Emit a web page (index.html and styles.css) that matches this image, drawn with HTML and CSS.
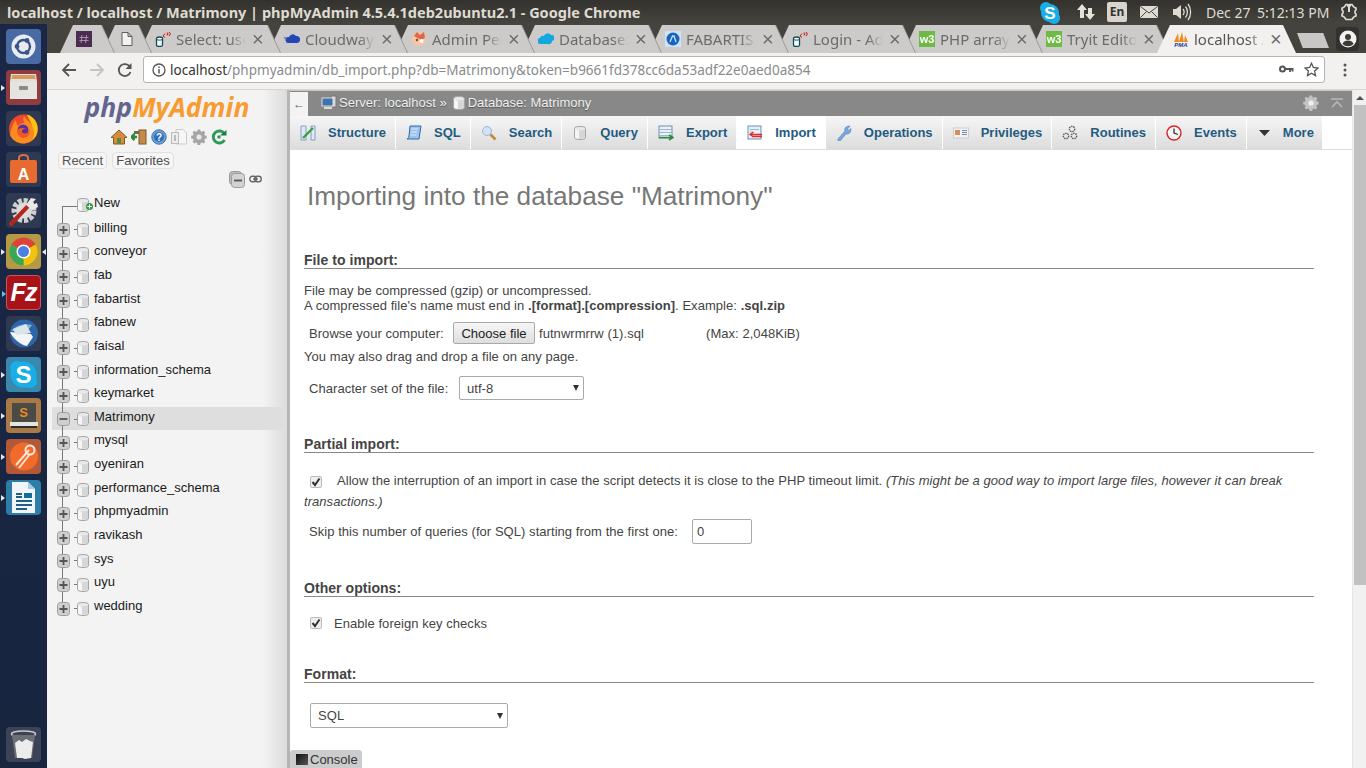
FILE: index.html
```html
<!DOCTYPE html>
<html lang="en">
<head>
<meta charset="utf-8">
<title>localhost / localhost / Matrimony | phpMyAdmin</title>
<link rel="stylesheet" href="styles.css">
</head>
<body>
<svg class="defs" width="0" height="0">
  <defs>
    <symbol id="db" viewBox="0 0 12 14">
      <path d="M.5 2.500C.5 1 3 .5 6 .5s5.500.5 5.500 2v9c0 1.500-2.500 2-5.500 2s-5.500-.5-5.500-2z" fill="#e9e9e9" stroke="#a5a5a5"/>
      <path d="M1 3.500c1.500 1 8.500 1 10 0v8c-1.500 1.300-8.500 1.300-10 0z" fill="#d6d6d6"/>
      <path d="M1 3.500c1.500 1 4 1 4 1v8c-2 0-3-.4-4-1z" fill="#f6f6f6"/>
    </symbol>
    <symbol id="plus" viewBox="0 0 13 14">
      <rect x=".5" y=".5" width="12" height="13" rx="3" fill="#cfcfcf" stroke="#9d9d9d"/>
      <path d="M2.500 7h8M6.500 3v8" stroke="#555" stroke-width="1.800"/>
    </symbol>
    <symbol id="minus" viewBox="0 0 13 14">
      <rect x=".5" y=".5" width="12" height="13" rx="3" fill="#cfcfcf" stroke="#9d9d9d"/>
      <path d="M2.500 7h8" stroke="#555" stroke-width="1.800"/>
    </symbol>
    <symbol id="sqlfav" viewBox="0 0 16 16">
      <path d="M1.500 7.500c0-1 1-1.500 3-1.500s3 .5 3 1.500v6.500c0 1-1 1.500-3 1.500s-3-.5-3-1.500z" fill="#fff" stroke="#0b4d57" stroke-width="1.300"/>
      <path d="M1.500 8.500c1 .8 5 .8 6 0" fill="none" stroke="#0b4d57"/>
      <path d="M8 5l2-2.500M8 5l2 1.500M15.500 3l-1.500-2M15.500 3l-1.500 2M11.800 2h1v1.500h-.7v1" fill="none" stroke="#d41414" stroke-width="1"/>
    </symbol>
    <symbol id="w3" viewBox="0 0 16 16">
      <rect width="16" height="16" fill="#6dbb44"/>
      <text x="8" y="12" text-anchor="middle" font-family="Liberation Sans, sans-serif" font-size="11" font-weight="700" fill="#fff">w3</text>
    </symbol>
    <symbol id="gear" viewBox="0 0 16 16">
      <path d="M6.500 1h3l.4 2 1.500.7 1.800-1.100 2 2-1.100 1.800.7 1.500 2 .4v3l-2 .4-.7 1.500 1.100 1.800-2 2-1.800-1.100-1.500.7-.4 2h-3l-.4-2-1.500-.7-1.800 1.100-2-2 1.100-1.800-.7-1.500-2-.4v-3l2-.4.7-1.500-1.100-1.800 2-2 1.800 1.100 1.500-.7z" transform="scale(.88) translate(1 -.5)" fill="currentColor"/>
      <circle cx="8" cy="8" r="2.600" fill="#fff" fill-opacity=".75"/>
    </symbol>
  </defs>
</svg>

<header class="panel">
  <div class="panel-title">localhost / localhost / Matrimony | phpMyAdmin 4.5.4.1deb2ubuntu2.1 - Google Chrome</div>
  <div class="indicators">
    <svg class="ind-skype" width="24" height="24" viewBox="0 0 24 24"><circle cx="8" cy="7" r="6" fill="#19aee8"/><circle cx="16" cy="17" r="6" fill="#19aee8"/><circle cx="12" cy="12" r="9" fill="#19aee8"/><text x="12" y="18" text-anchor="middle" font-family="Liberation Sans, sans-serif" font-weight="700" font-size="17" fill="#fff">S</text></svg>
    <svg class="ind-net" width="20" height="18" viewBox="0 0 20 18"><path d="M6 1l5 6H8v8H4V7H1zM14 17l-5-6h3V5h4v6h3z" fill="#e6e2da"/></svg>
    <span class="ind-lang">En</span>
    <svg class="ind-mail" width="18" height="12" viewBox="0 0 18 12"><rect width="18" height="12" rx="1" fill="#dfdbd2"/><path d="M.5.500L9 7l8.500-6.500M.5 11.500L6.500 5.500M17.500 11.500L11.500 5.500" fill="none" stroke="#444" stroke-width="1"/></svg>
    <svg class="ind-vol" width="20" height="18" viewBox="0 0 20 18"><path d="M1 6h3l5-4v14l-5-4H1z" fill="#dfdbd2"/><path d="M11 6c1.500 2 1.500 4 0 6M13.500 3.500c2.500 3 2.500 8 0 11M16 1c3.500 4.500 3.500 11.500 0 16" fill="none" stroke="#dfdbd2" stroke-width="1.300"/></svg>
    <span class="ind-date">Dec 27</span>
    <span class="ind-time">5:12:13 PM</span>
    <svg class="ind-power" width="16" height="18" viewBox="0 0 16 18"><path d="M5 1.500h1.500l.4 1.500h2.200l.4-1.500H11L12 3l1.500 1.500L15 5v2l-1 1v2l1 1v2l-1.500.5L12 15l-1 1.500H5L4 15l-1.500-1.500L1 13v-2l1-1V8L1 7V5l1.500-.5L4 3z" fill="none" stroke="#dfdbd2" stroke-width="1.700"/><path d="M8 1v8" stroke="#dfdbd2" stroke-width="2"/></svg>
  </div>
</header>

<div class="desktop">
  <nav class="launcher">
    <div class="lapp lapp-ubuntu"><svg width="35" height="35" viewBox="0 0 35 35"><circle cx="17.500" cy="17.500" r="12" fill="#e8ebf2"/><circle cx="17.500" cy="17.500" r="6.500" fill="none" stroke="#3b5488" stroke-width="2.400"/><circle cx="11" cy="17.500" r="2.400" fill="#3b5488"/><circle cx="21" cy="11.500" r="2.400" fill="#3b5488"/><circle cx="21" cy="23.500" r="2.400" fill="#3b5488"/></svg></div>
    <div class="lapp lapp-files"><span class="pip"></span><svg width="35" height="35" viewBox="0 0 35 35"><path d="M5 4h25l1 8H4z" fill="#e2e0dc"/><path d="M6 5h23l.5 4h-24z" fill="#d99a5f"/><rect x="4" y="12" width="27" height="17" fill="#e6e4df"/><rect x="13" y="16" width="9" height="4" rx="1" fill="#8b8b8b"/></svg></div>
    <div class="lapp"><svg width="35" height="35" viewBox="0 0 35 35"><circle cx="17.500" cy="18" r="14.500" fill="#f0472c"/><path d="M4 24c2 5 8 9 14 8.500 8-.5 13.500-7 13.500-14 0-6-3-11-8-13.500 3 3 4 7 3 10.500C25 11 20 9 18 5c-1 3-1 5 .5 7-3 0-5 1-6 3-1.500-1-2.500-3-2.500-6-3 3-5 9-6 15z" fill="#fb8c1f"/><circle cx="17" cy="19" r="5.500" fill="#5a2f9e"/><path d="M11 19c2-2 6-3 9-1-2 0-4 .5-4 2.500 0 2 3 2.500 5 1.500 2-1 3-3 3-4 .5 5-2 9-7 9-4 0-6-4-6-8z" fill="#f05a24"/><path d="M21 3.500c6 1.500 10.500 7.500 10.500 14 0 5-2 9-5 11.500 2-4 2.500-8 .5-12-1.500-5-4-8.500-6-13.500z" fill="#fdc314"/></svg></div>
    <div class="lapp lapp-store"><svg width="35" height="35" viewBox="0 0 35 35"><path d="M13 9V6c0-2 1-3 4.500-3S22 4 22 6v3" fill="none" stroke="#d97047" stroke-width="2"/><rect x="4" y="8" width="27" height="23" rx="2" fill="#e76a30"/><text x="17.500" y="28" text-anchor="middle" font-family="Liberation Sans, sans-serif" font-weight="700" font-size="16" fill="#fff">A</text></svg></div>
    <div class="lapp lapp-tools"><svg width="35" height="35" viewBox="0 0 35 35"><circle cx="18" cy="17.500" r="10" fill="none" stroke="#cfcfcf" stroke-width="5" stroke-dasharray="4 1.800"/><circle cx="18" cy="17.500" r="8" fill="#dcdcdc"/><path d="M5 31L23 12" stroke="#b3271e" stroke-width="4" stroke-linecap="round"/><path d="M20 12l5-7 5 1-3 3 1 2 3-1 1 4-6 3z" fill="#e8e8e8"/></svg></div>
    <div class="lapp lapp-chrome"><span class="pip pip-double"></span><span class="pip-right"></span><svg width="35" height="35" viewBox="0 0 35 35"><path d="M17.500 17.500L5.380 10.500A14 14 0 0 1 29.620 10.500z" fill="#db4437"/><path d="M17.500 17.500L29.620 10.500A14 14 0 0 1 17.500 31.500z" fill="#f4c20d"/><path d="M17.500 17.500L17.500 31.500A14 14 0 0 1 5.380 10.500z" fill="#3aa757"/><circle cx="17.500" cy="17.500" r="7" fill="#fff"/><circle cx="17.500" cy="17.500" r="5.500" fill="#4b7fe0"/></svg></div>
    <div class="lapp lapp-fz"><span class="pip pip-blue"></span><span class="fz-text">Fz</span></div>
    <div class="lapp lapp-tb"><svg width="35" height="35" viewBox="0 0 35 35"><circle cx="18" cy="17.500" r="14" fill="#2c65a8"/><path d="M5 15c5-6 14-8 21-6-2 3-4 5-7 7-4-1-10-1-14-1z" fill="#7fb2e5"/><path d="M4 16l21 2 2 3-6 9c-6-1-14-7-17-14z" fill="#f3f5f7"/><path d="M7 13l13-5 5 9-15 2z" fill="#dde4ea"/></svg></div>
    <div class="lapp lapp-skype"><span class="pip"></span><svg width="35" height="35" viewBox="0 0 35 35"><circle cx="11" cy="11" r="7" fill="#19aee8"/><circle cx="24" cy="24" r="7" fill="#19aee8"/><circle cx="17.500" cy="17.500" r="13" fill="#19aee8"/><text x="17.500" y="26" text-anchor="middle" font-family="Liberation Sans, sans-serif" font-weight="700" font-size="24" fill="#fff">S</text></svg></div>
    <div class="lapp lapp-sublime"><span class="pip"></span><svg width="35" height="35" viewBox="0 0 35 35"><rect x="6" y="5" width="24" height="20" fill="#4a4a46"/><rect x="4" y="24" width="28" height="4" fill="#e6e4df"/><rect x="5" y="28" width="26" height="2" fill="#2c2c2a"/><text x="17.500" y="19" text-anchor="middle" font-family="Liberation Sans, sans-serif" font-weight="700" font-size="13" fill="#e88d1f">S</text></svg></div>
    <div class="lapp lapp-postman"><span class="pip"></span><svg width="35" height="35" viewBox="0 0 35 35"><circle cx="18" cy="17.500" r="14" fill="#f36b2a"/><path d="M10 26l13-15M13 29l11-14" stroke="#fbe3d4" stroke-width="2"/><circle cx="24" cy="11" r="4.500" fill="none" stroke="#f6e7de" stroke-width="2"/></svg></div>
    <div class="lapp lapp-writer"><span class="pip"></span><svg width="35" height="35" viewBox="0 0 35 35"><path d="M6 2h16l7 7v24H6z" fill="#f2f5f7"/><path d="M22 2l7 7h-7z" fill="#adc8d8"/><rect x="18" y="13" width="8" height="5" fill="#0f6e9a"/><path d="M10 14h6M10 17h6M10 21h16M10 25h16M10 29h11" stroke="#1f5f83" stroke-width="1.800"/></svg></div>
    <div class="lapp lapp-trash"><svg width="35" height="35" viewBox="0 0 35 35"><ellipse cx="17.500" cy="7" rx="12" ry="3" fill="none" stroke="#c9c9c9" stroke-width="1.500"/><path d="M6 8l3 23h17l3-23" fill="#6c6f73"/><path d="M9 16l4-3 3 2 4-3 4 2 3 1-2 16-6 1-3-1-5 0z" fill="#ececec"/></svg></div>
  </nav>

  <div class="browser">
    <div class="strip">
      <div class="tab tab-first"><div class="tab-shape"><svg class="fav" width="16" height="16" viewBox="0 0 16 16"><rect width="16" height="16" fill="#4a2d4f"/><path d="M6 4L5 12M10.500 4l-1 8M3.500 6.500h9M3.500 9.500h9" stroke="#a892aa" stroke-width="1"/></svg></div></div>
      <div class="tab tab-pin"><div class="tab-shape"><svg class="fav" width="16" height="16" viewBox="0 0 16 16"><path d="M3 1.500h6l4 4v9H3zM9 1.500v4h4" fill="#f2f2f2" stroke="#5f5f5f"/></svg></div></div>
      <div class="tab tab-wide"><div class="tab-shape"><svg class="fav" width="16" height="16"><use href="#sqlfav"/></svg><span class="tab-label">Select: use</span><span class="tab-x">×</span></div></div>
      <div class="tab"><div class="tab-shape"><svg class="fav" width="16" height="16" viewBox="0 0 16 16"><path d="M5 12a3 3 0 0 1 0-6 4 4 0 0 1 7-1 3.500 3.500 0 0 1 1 7z" fill="#2246b5"/><path d="M0 7h4M1 9h3M2 11h3" stroke="#2246b5"/></svg><span class="tab-label">Cloudway</span><span class="tab-x">×</span></div></div>
      <div class="tab"><div class="tab-shape"><svg class="fav" width="16" height="16" viewBox="0 0 16 16"><circle cx="8" cy="8" r="7" fill="#f4c6a6"/><path d="M3 5l3-4 3 3 4-3 1 6-4 2z" fill="#e2674a"/><circle cx="6" cy="9" r="1.200" fill="#8a4a2f"/><circle cx="10.500" cy="10" r="2" fill="#fff"/></svg><span class="tab-label">Admin Pel</span><span class="tab-x">×</span></div></div>
      <div class="tab"><div class="tab-shape"><svg class="fav" width="16" height="16" viewBox="0 0 16 16"><path d="M3 13a3 3 0 0 1-1-6 3 3 0 0 1 4-2 4 4 0 0 1 7-1 3 3 0 0 1 1 6 3 3 0 0 1-4 3z" fill="#14a8e0"/></svg><span class="tab-label">Database:</span><span class="tab-x">×</span></div></div>
      <div class="tab"><div class="tab-shape"><svg class="fav" width="16" height="16" viewBox="0 0 16 16"><rect width="16" height="16" fill="#cfe3f5"/><circle cx="8" cy="8" r="6.500" fill="#1565c0"/><path d="M5 11l2.500-6h1.500l2 6" fill="none" stroke="#cfe3f5" stroke-width="1.300"/></svg><span class="tab-label">FABARTIS</span><span class="tab-x">×</span></div></div>
      <div class="tab"><div class="tab-shape"><svg class="fav" width="16" height="16"><use href="#sqlfav"/></svg><span class="tab-label">Login - Ad</span><span class="tab-x">×</span></div></div>
      <div class="tab"><div class="tab-shape"><svg class="fav" width="16" height="16"><use href="#w3"/></svg><span class="tab-label">PHP array</span><span class="tab-x">×</span></div></div>
      <div class="tab"><div class="tab-shape"><svg class="fav" width="16" height="16"><use href="#w3"/></svg><span class="tab-label">Tryit Edito</span><span class="tab-x">×</span></div></div>
      <div class="tab tab-active"><div class="tab-shape"><svg class="fav" width="16" height="16" viewBox="0 0 16 16"><path d="M1 11L5 2l1 9zM6 11l3-10 2 10zM11 11l1-7 3 7z" fill="#f08a1d"/><text x="8" y="16" text-anchor="middle" font-family="Liberation Sans, sans-serif" font-weight="700" font-style="italic" font-size="6" fill="#2b3b8f">PMA</text></svg><span class="tab-label">localhost /</span><span class="tab-x">×</span></div></div>
      <div class="newtab"></div>
      <div class="profile"><svg width="18" height="18" viewBox="0 0 18 18"><circle cx="9" cy="9" r="8.500" fill="#f2f1f0"/><circle cx="9" cy="7" r="3" fill="#3d3b36"/><path d="M3.500 14c1-3 3-3.500 5.500-3.500s4.500.5 5.500 3.500a8 8 0 0 1-11 0z" fill="#3d3b36"/></svg></div>
    </div>

    <div class="toolbar">
      <svg class="tb-back" width="16" height="16" viewBox="0 0 16 16"><path d="M15 8H2M8 2L2 8l6 6" fill="none" stroke="#555" stroke-width="1.800"/></svg>
      <svg class="tb-fwd" width="16" height="16" viewBox="0 0 16 16"><path d="M1 8h13M8 2l6 6-6 6" fill="none" stroke="#c4c4c4" stroke-width="1.800"/></svg>
      <svg class="tb-reload" width="16" height="16" viewBox="0 0 16 16"><path d="M13.500 10a6 6 0 1 1-.5-5" fill="none" stroke="#555" stroke-width="1.800"/><path d="M14.500 1v6h-6z" fill="#555"/></svg>
      <div class="omnibox">
        <svg class="omni-info" width="14" height="14" viewBox="0 0 14 14"><circle cx="7" cy="7" r="6" fill="none" stroke="#555" stroke-width="1.300"/><path d="M7 6v4.500M7 3.500v1.500" stroke="#555" stroke-width="1.500"/></svg>
        <span class="omni-url"><span class="omni-host">localhost</span>/phpmyadmin/db_import.php?db=Matrimony&amp;token=b9661fd378cc6da53adf22e0aed0a854</span>
        <svg class="omni-key" width="15" height="9" viewBox="0 0 15 9"><circle cx="3.500" cy="4" r="2.500" fill="none" stroke="#555" stroke-width="2"/><path d="M6 4h8.500M11 4v3M13.500 4v2.500" stroke="#555" stroke-width="1.800"/></svg>
        <svg class="omni-star" width="15" height="15" viewBox="0 0 15 15"><path d="M7.500 1.300l1.900 4.200 4.600.5-3.400 3.100.9 4.500-4-2.300-4 2.300.9-4.500L1 6l4.600-.5z" fill="none" stroke="#555" stroke-width="1.300"/></svg>
      </div>
      <svg class="tb-menu" width="4" height="14" viewBox="0 0 4 14"><circle cx="2" cy="2" r="1.500" fill="#555"/><circle cx="2" cy="7" r="1.500" fill="#555"/><circle cx="2" cy="12" r="1.500" fill="#555"/></svg>
    </div>

    <div class="page">
      <aside class="sidebar">
        <div class="pma-logo"><span class="logo-php">php</span><span class="logo-my">MyAdmin</span></div>
        <div class="pma-icons">
          <svg width="16" height="16" viewBox="0 0 16 16"><path d="M8 1L0 8.500h2.500V15h11V8.500H16z" fill="#d98b3d" stroke="#7a5a2a"/><rect x="6" y="9" width="4" height="6" fill="#5b8a3a"/></svg>
          <svg width="16" height="16" viewBox="0 0 16 16"><rect x="8" y="1" width="7" height="14" fill="#c58a4a" stroke="#7c5a2b"/><path d="M1 8h5M3.500 5L0.500 8l3 3" fill="none" stroke="#2e8a37" stroke-width="2.500"/><rect x="3" y="2" width="5" height="3" fill="#6e6e4a"/></svg>
          <svg width="16" height="16" viewBox="0 0 16 16"><circle cx="8" cy="8" r="7.200" fill="#6ba4dc" stroke="#3c6ea8"/><circle cx="8" cy="8" r="5" fill="#2f6fb6"/><text x="8" y="12" text-anchor="middle" font-family="Liberation Sans, sans-serif" font-weight="700" font-size="10" fill="#fff">?</text></svg>
          <svg width="16" height="16" viewBox="0 0 16 16"><path d="M5 .5h7l3.500 3.500v11H5z" fill="#f6f6f6" stroke="#ccc"/><rect x=".5" y="3.500" width="7" height="11" fill="#eee" stroke="#bbb"/><rect x="3" y="6" width="2" height="6" fill="#bbb"/></svg>
          <svg class="gear-gray" width="16" height="16"><use href="#gear"/></svg>
          <svg width="16" height="16" viewBox="0 0 16 16"><path d="M13.500 11a6 6 0 1 1 0-6" fill="none" stroke="#2e9a5a" stroke-width="3"/><path d="M9 6.500h6.500V1z" fill="#1f7d42"/><circle cx="8" cy="8" r="1.800" fill="#2e9a5a"/></svg>
        </div>
        <div class="pma-tabs"><span class="pma-pill pma-recent">Recent</span><span class="pma-pill pma-fav">Favorites</span></div>
        <div class="tree-tools">
          <svg width="16" height="17" viewBox="0 0 16 17"><rect x=".5" y=".5" width="12" height="13" rx="3" fill="#bbb" stroke="#999"/><rect x="2.500" y="2.500" width="13" height="14" rx="3" fill="#d2d2d2" stroke="#9d9d9d"/><path d="M5 9.500h8" stroke="#555" stroke-width="1.800"/></svg>
          <svg width="13" height="8" viewBox="0 0 13 8"><rect x=".8" y="1.300" width="6.500" height="5.400" rx="2.500" fill="none" stroke="#666" stroke-width="1.400"/><rect x="5.700" y="1.300" width="6.500" height="5.400" rx="2.500" fill="none" stroke="#666" stroke-width="1.400"/><path d="M4 4h5" stroke="#666" stroke-width="1.400"/></svg>
        </div>
        <ul class="tree">
          <li class="row row-new"><span class="node-gap"></span><svg class="dbicon" width="12" height="14"><use href="#db"/></svg><svg class="newbadge" width="7" height="7" viewBox="0 0 7 7"><circle cx="3.500" cy="3.500" r="3.500" fill="#2f9b41"/><path d="M1.300 3.500h4.400M3.500 1.300v4.400" stroke="#fff"/></svg><span class="dbname dbname-new">New</span></li>
          <li class="row"><svg class="exp" width="13" height="14"><use href="#plus"/></svg><svg class="dbicon" width="12" height="14"><use href="#db"/></svg><span class="dbname">billing</span></li>
          <li class="row"><svg class="exp" width="13" height="14"><use href="#plus"/></svg><svg class="dbicon" width="12" height="14"><use href="#db"/></svg><span class="dbname">conveyor</span></li>
          <li class="row"><svg class="exp" width="13" height="14"><use href="#plus"/></svg><svg class="dbicon" width="12" height="14"><use href="#db"/></svg><span class="dbname">fab</span></li>
          <li class="row"><svg class="exp" width="13" height="14"><use href="#plus"/></svg><svg class="dbicon" width="12" height="14"><use href="#db"/></svg><span class="dbname">fabartist</span></li>
          <li class="row"><svg class="exp" width="13" height="14"><use href="#plus"/></svg><svg class="dbicon" width="12" height="14"><use href="#db"/></svg><span class="dbname">fabnew</span></li>
          <li class="row"><svg class="exp" width="13" height="14"><use href="#plus"/></svg><svg class="dbicon" width="12" height="14"><use href="#db"/></svg><span class="dbname">faisal</span></li>
          <li class="row"><svg class="exp" width="13" height="14"><use href="#plus"/></svg><svg class="dbicon" width="12" height="14"><use href="#db"/></svg><span class="dbname">information_schema</span></li>
          <li class="row"><svg class="exp" width="13" height="14"><use href="#plus"/></svg><svg class="dbicon" width="12" height="14"><use href="#db"/></svg><span class="dbname">keymarket</span></li>
          <li class="row row-selected"><svg class="exp" width="13" height="14"><use href="#minus"/></svg><svg class="dbicon" width="12" height="14"><use href="#db"/></svg><span class="dbname">Matrimony</span></li>
          <li class="row"><svg class="exp" width="13" height="14"><use href="#plus"/></svg><svg class="dbicon" width="12" height="14"><use href="#db"/></svg><span class="dbname">mysql</span></li>
          <li class="row"><svg class="exp" width="13" height="14"><use href="#plus"/></svg><svg class="dbicon" width="12" height="14"><use href="#db"/></svg><span class="dbname">oyeniran</span></li>
          <li class="row"><svg class="exp" width="13" height="14"><use href="#plus"/></svg><svg class="dbicon" width="12" height="14"><use href="#db"/></svg><span class="dbname">performance_schema</span></li>
          <li class="row"><svg class="exp" width="13" height="14"><use href="#plus"/></svg><svg class="dbicon" width="12" height="14"><use href="#db"/></svg><span class="dbname">phpmyadmin</span></li>
          <li class="row"><svg class="exp" width="13" height="14"><use href="#plus"/></svg><svg class="dbicon" width="12" height="14"><use href="#db"/></svg><span class="dbname">ravikash</span></li>
          <li class="row"><svg class="exp" width="13" height="14"><use href="#plus"/></svg><svg class="dbicon" width="12" height="14"><use href="#db"/></svg><span class="dbname">sys</span></li>
          <li class="row"><svg class="exp" width="13" height="14"><use href="#plus"/></svg><svg class="dbicon" width="12" height="14"><use href="#db"/></svg><span class="dbname">uyu</span></li>
          <li class="row row-last"><svg class="exp" width="13" height="14"><use href="#plus"/></svg><svg class="dbicon" width="12" height="14"><use href="#db"/></svg><span class="dbname">wedding</span></li>
        </ul>
      </aside>

      <main class="main">
        <div class="crumbs">
          <span class="crumb-back">←</span>
          <svg class="crumb-server" width="16" height="15" viewBox="0 0 16 15"><rect x="10" y="1" width="5" height="11" fill="#d8d8d8" stroke="#777"/><rect x="1" y="3" width="11" height="8" fill="#3f73ad" stroke="#ddd"/><path d="M3 13h8" stroke="#ddd" stroke-width="2"/></svg>
          <span class="crumb-text">Server: localhost »</span>
          <svg class="crumb-db" width="12" height="14"><use href="#db"/></svg>
          <span class="crumb-text">Database: Matrimony</span>
          <svg class="crumb-gear" width="16" height="16"><use href="#gear"/></svg>
          <svg class="crumb-up" width="12" height="10" viewBox="0 0 12 10"><path d="M0 1h12M1 9l5-5 5 5" fill="none" stroke="#b8b8b8" stroke-width="1.600"/></svg>
        </div>
        <div class="navtabs">
          <a class="navtab"><svg width="16" height="16" viewBox="0 0 16 16"><path d="M1 1h5v14H1zM11 1h4v14h-4z" fill="#dfe9f5" stroke="#6a8fba" stroke-width=".8"/><path d="M3 13L13 3" stroke="#3aa040" stroke-width="2.400"/></svg>Structure</a>
          <a class="navtab"><svg width="16" height="16" viewBox="0 0 16 16"><path d="M4 1h11l-2 13H1c1-1 2-1 2-3z" fill="#9cc3ee" stroke="#2f6ca8"/><path d="M5 4h7M5 7h6M4.500 10h6" stroke="#dcebfa"/></svg>SQL</a>
          <a class="navtab"><svg width="16" height="16" viewBox="0 0 16 16"><circle cx="6" cy="6" r="4.500" fill="#cfe4f8" stroke="#9db7cf"/><path d="M9.500 9.500l5 5" stroke="#c78a3c" stroke-width="2.600"/></svg>Search</a>
          <a class="navtab"><svg width="16" height="16" viewBox="0 0 16 16"><use href="#db" width="12" height="14" x="2" y="1"/></svg>Query</a>
          <a class="navtab"><svg width="16" height="16" viewBox="0 0 16 16"><rect x="1" y="1" width="13" height="12" fill="#e8f0f8" stroke="#6a8fba"/><path d="M1 4.500h13M1 7.500h13M1 10.500h13" stroke="#9db7cf"/><path d="M1 12.500h13M11 10l4 2.500-4 2.500" fill="none" stroke="#2e8a37" stroke-width="1.600"/></svg>Export</a>
          <a class="navtab navtab-active"><svg width="16" height="16" viewBox="0 0 16 16"><rect x="1" y="1" width="13" height="13" fill="#e8f0f8" stroke="#6a8fba"/><path d="M3 4.500h9M3 7h3" stroke="#9db7cf"/><path d="M15 9.500H4M6.500 7L3 9.500 6.500 12M15 11.500H5" fill="none" stroke="#e02a2a" stroke-width="1.300"/></svg>Import</a>
          <a class="navtab"><svg width="16" height="16" viewBox="0 0 16 16"><path d="M2 14l7-8c-1-3 1-5 5-5l-2.500 3 1 1.500 2.500-2c0 4-2 6-5 5.500l-6 7c-1 1-3-.5-2-2z" fill="#7aa7dd" stroke="#4f7fb8" stroke-width=".6"/></svg>Operations</a>
          <a class="navtab"><svg width="16" height="16" viewBox="0 0 16 16"><rect x=".5" y="3" width="15" height="10" fill="#f2f2f2" stroke="#ccc"/><rect x="2" y="5" width="5" height="5" fill="#d98b5f"/><path d="M9 5.500h5M9 7.500h5M9 9.500h5" stroke="#6a8fba"/></svg>Privileges</a>
          <a class="navtab"><svg width="16" height="16" viewBox="0 0 16 16"><circle cx="10" cy="4" r="2.700" fill="none" stroke="#555" stroke-width="1.300" stroke-dasharray="1.500 .8"/><circle cx="4" cy="11" r="2.700" fill="none" stroke="#555" stroke-width="1.300" stroke-dasharray="1.500 .8"/><circle cx="12" cy="11" r="2.700" fill="none" stroke="#555" stroke-width="1.300" stroke-dasharray="1.500 .8"/></svg>Routines</a>
          <a class="navtab"><svg width="16" height="16" viewBox="0 0 16 16"><circle cx="8" cy="8" r="7" fill="#f4f4f4" stroke="#d8232a" stroke-width="1.400"/><path d="M8 3.500V8l4 1.500" fill="none" stroke="#333" stroke-width="1.300"/></svg>Events</a>
          <a class="navtab navtab-more"><svg width="16" height="16" viewBox="0 0 16 16"><path d="M2 5h11L7.500 11z" fill="#333"/></svg>More</a>
        </div>

        <div class="content">
          <h1 class="title">Importing into the database "Matrimony"</h1>

          <h2 class="legend legend-first">File to import:</h2>
          <p class="lines">File may be compressed (gzip) or uncompressed.<br>A compressed file's name must end in <b>.[format].[compression]</b>. Example: <b>.sql.zip</b></p>
          <div class="browse-row">
            <span class="browse-label">Browse your computer:</span>
            <button class="filebtn" type="button">Choose file</button>
            <span class="filename">futnwrmrrw (1).sql</span>
            <span class="filemax">(Max: 2,048KiB)</span>
          </div>
          <p class="drag">You may also drag and drop a file on any page.</p>
          <div class="charset-row">
            <span class="charset-label">Character set of the file:</span>
            <div class="dropdown dropdown-charset"><span>utf-8</span><i class="caret"></i></div>
          </div>

          <h2 class="legend legend-partial">Partial import:</h2>
          <p class="interrupt"><span class="check"><svg width="10" height="10" viewBox="0 0 10 10"><path d="M1.500 5l2.500 3L8.500 1.500" fill="none" stroke="#333" stroke-width="2"/></svg></span>Allow the interruption of an import in case the script detects it is close to the PHP timeout limit. <i>(This might be a good way to import large files, however it can break transactions.)</i></p>
          <div class="skip-row">
            <span class="skip-label">Skip this number of queries (for SQL) starting from the first one:</span>
            <span class="numbox">0</span>
          </div>

          <h2 class="legend legend-other">Other options:</h2>
          <div class="fk-row"><span class="check"><svg width="10" height="10" viewBox="0 0 10 10"><path d="M1.500 5l2.500 3L8.500 1.500" fill="none" stroke="#333" stroke-width="2"/></svg></span><span class="fk-label">Enable foreign key checks</span></div>

          <h2 class="legend legend-format">Format:</h2>
          <div class="dropdown dropdown-format"><span>SQL</span><i class="caret"></i></div>

          <h2 class="legend legend-specific">Format-specific options:</h2>
        </div>

        <div class="console"><span class="console-icon"></span>Console</div>
      </main>

      <div class="scrollbar"><span class="scroll-arrow"></span><span class="scroll-thumb"></span></div>
    </div>
  </div>
</div>
</body>
</html>
```

FILE: styles.css
```css
* { box-sizing: border-box; }
html, body { margin: 0; padding: 0; height: 768px; overflow: hidden; }
body { font-family: "Liberation Sans", Arial, sans-serif; font-size: 13px; color: #444; background: #fff; display: flex; flex-direction: column; width: 1366px; }
.defs { position: absolute; }
svg { flex: none; display: block; }

/* top panel */
.panel { height: 24px; background: linear-gradient(#34322e, #46443e); display: flex; align-items: center; justify-content: space-between; color: #dfdbd2; flex: none; }
.panel-title { font-family: "Noto Sans", sans-serif; font-weight: 700; font-size: 14.5px; padding-left: 7px; white-space: nowrap; }
.indicators { display: flex; align-items: center; height: 24px; font-family: "Noto Sans", sans-serif; font-size: 14px; white-space: nowrap; }
.ind-skype { margin-right: 14px; margin-top: 2px; }
.ind-net { margin-right: 11px; }
.ind-lang { width: 20px; height: 20px; background: #d9d5cd; color: #333; border-radius: 2px; font-size: 12px; font-weight: 700; text-align: center; line-height: 20px; margin-right: 13px; }
.ind-mail { margin-right: 14px; }
.ind-vol { margin-right: 14px; }
.ind-date { width: 51px; }
.ind-time { width: 84px; }
.ind-power { margin-right: 9px; }

.desktop { flex: 1; display: flex; min-height: 0; }

/* launcher */
.launcher { width: 47px; flex: none; background: linear-gradient(#1a2747, #18253f); display: flex; flex-direction: column; align-items: center; gap: 6px; padding: 5px 0 6px; }
.lapp { width: 35px; height: 35px; border-radius: 4px; background: #2f3a52; position: relative; flex: none; }
.lapp-ubuntu { background: #4a6aa3; }
.lapp-files { background: #8e3c40; }
.lapp-chrome { background: #b59a45; }
.lapp-fz { background: #a81319; border: 1px solid #c9565c; display: flex; align-items: center; justify-content: center; }
.fz-text { color: #fff; font-weight: 700; font-style: italic; font-size: 25px; font-family: "Liberation Sans", sans-serif; letter-spacing: -1px; }
.lapp-skype { background: #3b88ad; }
.lapp-sublime { background: #a97a45; }
.lapp-postman { background: #b2593a; }
.lapp-writer { background: #2c7ea8; }
.lapp-trash { margin-top: auto; background: #3c4357; }
.pip { position: absolute; left: -5px; top: 15px; width: 0; height: 0; border-left: 4px solid #e8e8e8; border-top: 3px solid transparent; border-bottom: 3px solid transparent; }
.pip-blue { border-left-color: #6cc0e8; }
.pip-double { left: -5px; }
.pip-right { position: absolute; right: -5px; top: 15px; width: 0; height: 0; border-right: 4px solid #e8e8e8; border-top: 3px solid transparent; border-bottom: 3px solid transparent; }

.browser { flex: 1; display: flex; flex-direction: column; min-width: 0; }

/* tab strip */
.strip { height: 29px; flex: none; background: #45433d; display: flex; align-items: flex-end; padding-left: 13px; position: relative; }
.tab { width: 139px; height: 28px; margin-left: -12px; flex: none; position: relative; filter: drop-shadow(1px 0 0 #9b9997); }
.tab-shape { height: 100%; background: #cdcbc9; clip-path: polygon(13px 0, calc(100% - 13px) 0, 100% 100%, 0 100%); display: flex; align-items: center; padding-left: 16px; color: #6b6b6b; font-family: "Noto Sans", sans-serif; font-size: 15px; white-space: nowrap; }
.tab-first { width: 54px; margin-left: 0; z-index: 20; }
.tab-pin { width: 49px; z-index: 19; }
.tab-wide { width: 141px; z-index: 18; }
.tab:nth-child(4) { z-index: 17; }
.tab:nth-child(5) { z-index: 16; }
.tab:nth-child(6) { z-index: 15; }
.tab:nth-child(7) { z-index: 14; }
.tab:nth-child(8) { z-index: 13; }
.tab:nth-child(9) { z-index: 12; }
.tab:nth-child(10) { z-index: 11; }
.tab-active { z-index: 30; filter: none; }
.tab-active .tab-shape { background: #f2f1f0; color: #555; }
.tab-first .tab-shape { padding-left: 16px; }
.tab-pin .tab-shape { padding-left: 17px; }
.tab .fav { margin-right: 5px; }
.tab-label { width: 70px; overflow: hidden; -webkit-mask-image: linear-gradient(90deg, #000 78%, transparent); mask-image: linear-gradient(90deg, #000 78%, transparent); }
.tab-x { margin-left: 6px; font-size: 20px; line-height: 20px; color: #6b6b6b; font-family: "Liberation Sans", sans-serif; }
.newtab { width: 32px; height: 15px; margin: 0 0 5px 1px; background: #c9c7c5; clip-path: polygon(0 0, 82% 0, 100% 100%, 18% 100%); flex: none; }
.profile { width: 23px; height: 24px; background: #33312d; border-radius: 4px; margin: 0 0 2px 7px; display: flex; align-items: center; justify-content: center; flex: none; }

/* toolbar */
.toolbar { height: 37px; flex: none; background: #f2f1f0; display: flex; align-items: center; padding-bottom: 3px; border-bottom: 1px solid #d6d5d3; }
.tb-back { margin-left: 14px; }
.tb-fwd { margin-left: 12px; }
.tb-reload { margin-left: 12px; }
.omnibox { width: 1182px; height: 27px; margin-left: 10px; background: #fff; border: 1px solid #b5b4b2; border-radius: 3px; display: flex; align-items: center; padding: 0 5px 0 8px; }
.omni-url { font-family: "Noto Sans", sans-serif; font-size: 13.5px; color: #8a8a8a; margin-left: 4px; white-space: nowrap; flex: 1; }
.omni-host { color: #333; }
.omni-key { margin-right: 10px; }
.tb-menu { margin-left: 18px; }

/* page */
.page { flex: 1; display: flex; min-height: 0; background: #fff; }
.sidebar { width: 243px; flex: none; background: linear-gradient(90deg, #f3f3f3 0, #f3f3f3 215px, #dcdcdc 240px, #b5b5b5 240px); padding-top: 2px; overflow: hidden; }
.pma-logo { text-align: center; font-family: "Open Sans", sans-serif; font-size: 26.5px; font-weight: 700; font-style: italic; line-height: 30px; padding-right: 3px; }
.logo-php { color: #63658f; }
.logo-my { color: #f89c32; }
.pma-icons { display: flex; gap: 4px; padding-left: 64px; margin-top: 6px; height: 18px; align-items: center; }
.gear-gray { color: #a5a5a5; }
.pma-tabs { display: flex; gap: 5px; margin: 6px 0 0 11px; letter-spacing: 0; }
.pma-pill { height: 17px; padding: 0 3px; line-height: 16px; border: 1px solid #e0e0e0; border-radius: 4px; background: #f6f6f6; color: #555; }
.pma-fav { color: #4d4d4d; }
.tree-tools { display: flex; align-items: center; gap: 4px; height: 18px; padding-left: 182px; margin-top: 1px; }
.tree { list-style: none; margin: 5.6px 0 0; padding: 0 5px; }
.row { height: 23.67px; display: flex; align-items: center; width: 233px; background: linear-gradient(#777, #777) 10px 0 / 1px 100% no-repeat, linear-gradient(#777, #777) 22px 12px / 8px 1px no-repeat; color: #1a1a1a; }
.row-new { background: linear-gradient(#777, #777) 10px 12px / 1px 12px no-repeat, linear-gradient(#777, #777) 10px 12px / 16px 1px no-repeat; position: relative; }
.row-selected { background: linear-gradient(#777, #777) 10px 0 / 1px 100% no-repeat, linear-gradient(#777, #777) 22px 12px / 8px 1px no-repeat, #dedede; }
.row-last { background: linear-gradient(#777, #777) 10px 0 / 1px 12px no-repeat, linear-gradient(#777, #777) 22px 12px / 8px 1px no-repeat; }
.exp { margin-left: 5px; margin-top: 2px; }
.node-gap { width: 18px; }
.dbicon { margin-left: 7px; margin-top: 2px; }
.row-new .dbicon { margin-left: 7px; margin-top: -1px; }
.newbadge { position: absolute; left: 34px; top: 9px; }
.dbname { margin-left: 5px; margin-top: -4px; }
.dbname-new { margin-top: -5px; }

/* main */
.main { flex: 1; min-width: 0; display: flex; flex-direction: column; position: relative; overflow: hidden; }
.crumbs { height: 26px; background: #888; border-top: 1px solid #c8c8c8; display: flex; align-items: center; color: #f0f0f0; flex: none; text-shadow: 0 1px 1px #555; }
.crumb-back { width: 18px; height: 24px; background: #f3f3f3; color: #666; text-align: center; line-height: 24px; font-size: 12px; text-shadow: none; }
.crumb-text { margin-bottom: 3px; }
.crumb-server { margin-left: 13px; margin-right: 2px; margin-bottom: 2px; }
.crumb-db { margin-left: 6px; margin-right: 3px; margin-bottom: 1px; }
.crumb-gear { margin-left: auto; margin-bottom: 2px; color: #c4c4c4; }
.crumb-up { margin: 0 9px 2px 12px; }
.navtabs { height: 34px; flex: none; display: flex; background: #fff; border-bottom: 1px solid #ddd; letter-spacing: .02px; }
.navtab { display: flex; align-items: center; padding: 0 9px 0 10px; border-right: 1px solid #fff; background: linear-gradient(#f6f6f6, #dcdcdc); color: #235a81; font-weight: 700; white-space: nowrap; }
.navtab svg { margin-right: 12px; }
.navtab-active { background: #fff; }
.navtab-more svg { margin-right: 10px; }
.navtab-more { padding-right: 8px; }

.content { padding: 0 38px 0 14px; flex: 1; letter-spacing: .05px; }
.title { font-size: 26.2px; font-weight: 400; color: #777; line-height: 30px; margin: 31px 0 0 3px; letter-spacing: 0; }
.legend { font-size: 14px; font-weight: 700; color: #444; line-height: 16px; margin: 0; border-bottom: 1px solid #888; }
.legend-first { margin-top: 41px; }
.legend-partial { margin-top: 36px; }
.legend-other { margin-top: 36px; }
.legend-format { margin-top: 35px; }
.legend-specific { margin-top: 38px; border-bottom: 0; }
.lines { margin: 14px 0 0; line-height: 15px; }
.browse-row { margin-top: 9px; height: 22px; display: flex; align-items: center; padding-left: 5px; }
.browse-label { width: 144px; }
.filebtn { height: 22px; width: 82px; padding: 0; border: 1px solid #a9a9a9; border-radius: 2px; background: linear-gradient(#f6f6f6, #dedede); font: 13px "Liberation Sans", sans-serif; color: #222; }
.filename { margin-left: 4px; width: 167px; }
.drag { margin: 5px 0 0; line-height: 15px; }
.charset-row { margin-top: 12px; height: 24px; display: flex; align-items: center; padding-left: 5px; }
.charset-label { width: 150px; }
.dropdown { height: 25px; border: 1px solid #aaa; border-radius: 2px; background: #fff; display: flex; align-items: center; justify-content: space-between; padding: 0 4px 0 7px; color: #444; }
.dropdown-charset { width: 125px; height: 24px; }
.dropdown-format { width: 198px; margin: 20px 0 0 6px; }
.caret { width: 0; height: 0; border-left: 3.500px solid transparent; border-right: 3.500px solid transparent; border-top: 6px solid #333; }
.interrupt { margin: 17px 0 0; line-height: 21px; }
.check { display: inline-flex; align-items: center; justify-content: center; width: 12px; height: 12px; border: 1px solid #bbb; border-radius: 2px; background: #eee; vertical-align: -2px; margin: 0 15px 0 6px; }
.skip-row { margin-top: 7px; height: 25px; display: flex; align-items: center; padding-left: 5px; }
.skip-label { width: 383px; }
.numbox { width: 60px; height: 25px; border: 1px solid #aaa; border-radius: 2px; padding-left: 4px; line-height: 23px; color: #444; }
.fk-row { margin-top: 18px; height: 16px; display: flex; align-items: center; }
.fk-row .check { margin-right: 12px; }
.console { position: absolute; left: 0; bottom: 0; width: 72px; height: 18px; background: #ccc; border-radius: 3px 3px 0 0; display: flex; align-items: center; padding-left: 6px; color: #333; gap: 2px; }
.console-icon { width: 12px; height: 11px; background: linear-gradient(135deg, #111, #555); }

.scrollbar { width: 14px; flex: none; background: #f1f1f1; border-left: 1px solid #e6e6e6; display: flex; flex-direction: column; align-items: center; }
.scroll-arrow { width: 0; height: 0; margin-top: 6px; border-left: 4px solid transparent; border-right: 4px solid transparent; border-bottom: 4px solid #505050; }
.scroll-thumb { width: 12px; height: 480px; margin-top: 5px; background: #c1c1c1; }
```
